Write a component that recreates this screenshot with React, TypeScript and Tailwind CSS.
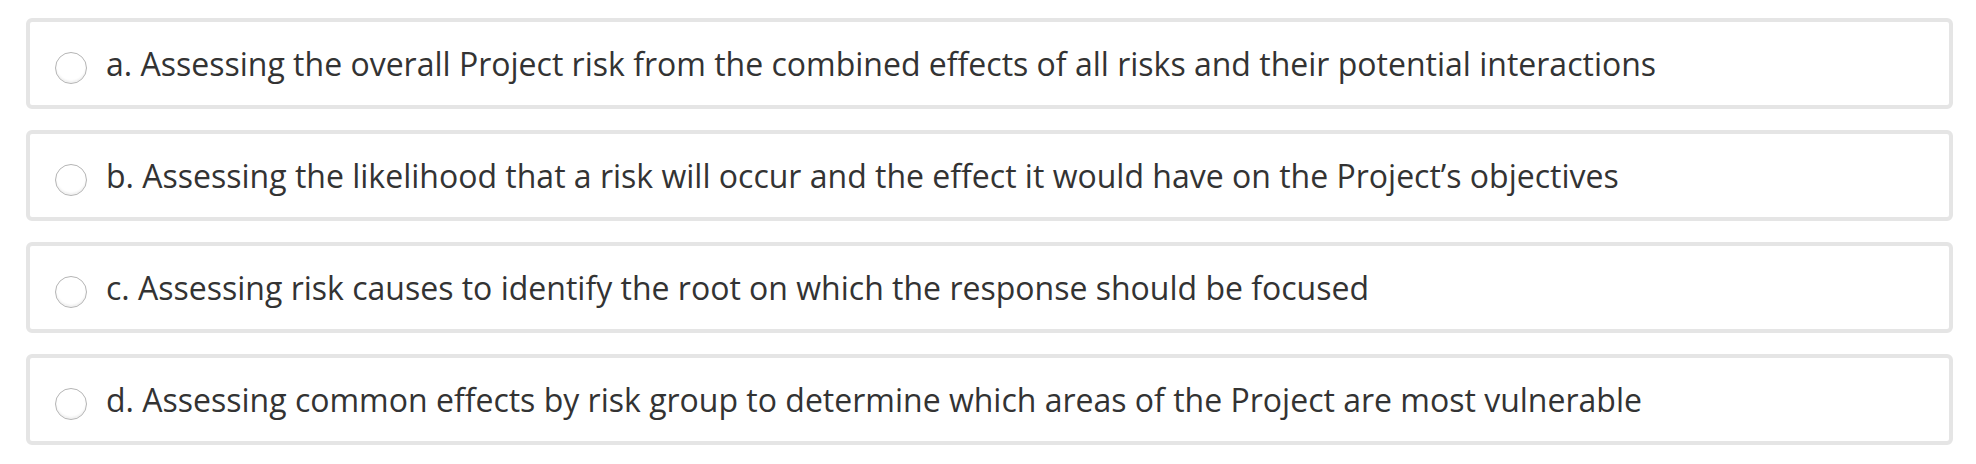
const options = [
  'a. Assessing the overall Project risk from the combined effects of all risks and their potential interactions',
  'b. Assessing the likelihood that a risk will occur and the effect it would have on the Project\u2019s objectives',
  'c. Assessing risk causes to identify the root on which the response should be focused',
  'd. Assessing common effects by risk group to determine which areas of the Project are most vulnerable',
]

export default function App() {
  return (
    <div className="min-h-screen bg-white pl-[26px] pt-[18px] font-['Open_Sans',sans-serif]">
      <div className="flex w-[1927px] flex-col gap-[21px]">
        {options.map(opt => (
          <label
            key={opt}
            className="flex h-[91px] items-center rounded-[6px] border-4 border-[#e5e5e5] bg-white pl-[25px]"
          >
            <span className="mt-[8px] h-[32px] w-[32px] shrink-0 rounded-full border border-[#b5b5b5] bg-white shadow-[inset_0_-2px_2px_rgba(0,0,0,0.06)]" />
            <span className="ml-[19px] text-[32px] leading-none text-[#333333]">{opt}</span>
          </label>
        ))}
      </div>
    </div>
  )
}
